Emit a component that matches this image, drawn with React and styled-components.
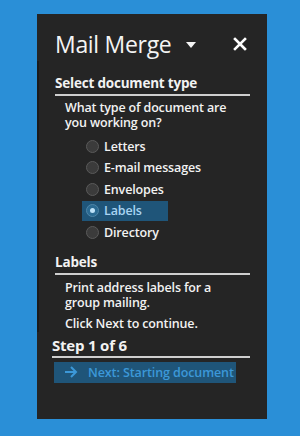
import React from "react"
import styled, { createGlobalStyle } from "styled-components"

const Global = createGlobalStyle`
  html, body {
    margin: 0;
    padding: 0;
    background: #2a8fd7;
  }
  body {
    font-family: "Open Sans", "Noto Sans", "DejaVu Sans", sans-serif;
    -webkit-font-smoothing: antialiased;
  }
`

const Page = styled.div`
  width: 300px;
  height: 436px;
  box-sizing: border-box;
  padding: 14px 33px 17px 37px;
`

const Panel = styled.div`
  height: 100%;
  background: #252525;
  color: #f2f2f2;
  display: flex;
  flex-direction: column;
`

const Header = styled.div`
  display: flex;
  align-items: center;
  padding: 13px 20px 0 18px;
  height: 34px;
`

const Title = styled.h1`
  margin: 0;
  font-size: 23px;
  font-weight: 400;
  line-height: 30px;
  letter-spacing: -0.3px;
  color: #f4f4f4;
`

const Caret = styled.span`
  margin-left: 15px;
  margin-top: 2px;
  width: 0;
  height: 0;
  border-left: 5.5px solid transparent;
  border-right: 5.5px solid transparent;
  border-top: 6px solid #f4f4f4;
`

const Close = styled.button`
  margin-left: auto;
  background: none;
  border: 0;
  padding: 0;
  width: 14px;
  height: 14px;
  display: flex;
  color: #fff;
`

const Scroll = styled.div`
  border-left: 2px solid #1b1b1b;
  padding: 0 17px 0 16px;
  flex: 0 0 auto;
`

const Heading = styled.h2`
  margin: 0;
  font-size: ${p => (p.$big ? "15px" : "13.5px")};
  font-weight: 700;
  line-height: 18px;
  padding-bottom: 2px;
  border-bottom: 2px solid #cfcfcf;
  letter-spacing: -0.2px;
`

const Text = styled.p`
  margin: ${p => p.$gap || "4px"} 10px 0 10px;
  font-size: 12.5px;
  font-weight: 600;
  line-height: 14.5px;
  letter-spacing: -0.15px;
`

const Options = styled.div`
  display: flex;
  flex-direction: column;
  gap: 1.5px;
  margin: 6px 0 0 27px;
`

const Option = styled.label`
  display: flex;
  align-items: center;
  gap: 5px;
  height: 20px;
  width: 86px;
  box-sizing: border-box;
  padding-left: 4px;
  white-space: nowrap;
  font-size: 12.5px;
  font-weight: 600;
  letter-spacing: -0.15px;
  background: ${p => (p.$on ? "#1f5579" : "transparent")};
  color: ${p => (p.$on ? "#a9d4f2" : "#f2f2f2")};
`

const Radio = styled.span`
  flex: 0 0 13px;
  width: 13px;
  height: 13px;
  box-sizing: border-box;
  border-radius: 50%;
  border: 1px solid ${p => (p.$on ? "#4f86a8" : "#5a5a5a")};
  background: ${p => (p.$on ? "#2b6a92" : "#3b3b3b")};
  display: flex;
  align-items: center;
  justify-content: center;

  &::after {
    content: "";
    width: 5px;
    height: 5px;
    border-radius: 50%;
    background: ${p => (p.$on ? "#bfe2f8" : "transparent")};
  }
`

const Section = styled.div`
  margin-top: ${p => p.$top || "0"};
`

const Footer = styled.div`
  padding: 4px 17px 0 15px;
`

const NextButton = styled.button`
  margin: 4px 0 0 2px;
  width: 182px;
  height: 21px;
  border: 0;
  background: #1f5579;
  color: #3c98d8;
  display: flex;
  align-items: center;
  gap: 10px;
  padding: 0 0 0 10px;
  font-family: inherit;
  font-size: 12.5px;
  font-weight: 600;
  letter-spacing: -0.1px;
  white-space: nowrap;
`

const types = ["Letters", "E-mail messages", "Envelopes", "Labels", "Directory"]

export default function App() {
  return (
    <>
      <Global />
      <Page>
        <Panel>
          <Header>
            <Title>Mail Merge</Title>
            <Caret />
            <Close aria-label="Close">
              <svg width="14" height="14" viewBox="0 0 14 14">
                <path d="M2 2 L12 12 M12 2 L2 12" stroke="#fff" strokeWidth="2.6" strokeLinecap="square" />
              </svg>
            </Close>
          </Header>
          <Scroll>
            <Section $top="13px">
              <Heading>Select document type</Heading>
              <Text $gap="5px">What type of document are you working on?</Text>
              <Options>
                {types.map(t => (
                  <Option key={t} $on={t === "Labels"}>
                    <Radio $on={t === "Labels"} />
                    {t}
                  </Option>
                ))}
              </Options>
            </Section>
            <Section $top="11px">
              <Heading>Labels</Heading>
              <Text $gap="6px">Print address labels for a group mailing.</Text>
              <Text $gap="7px">Click Next to continue.</Text>
            </Section>
          </Scroll>
          <Footer>
            <Heading $big>Step 1 of 6</Heading>
            <NextButton>
              <svg width="14" height="12" viewBox="0 0 14 12">
                <path d="M1 6 H12 M7 1 L12 6 L7 11" stroke="#3c98d8" strokeWidth="2" fill="none" />
              </svg>
              Next: Starting document
            </NextButton>
          </Footer>
        </Panel>
      </Page>
    </>
  )
}
